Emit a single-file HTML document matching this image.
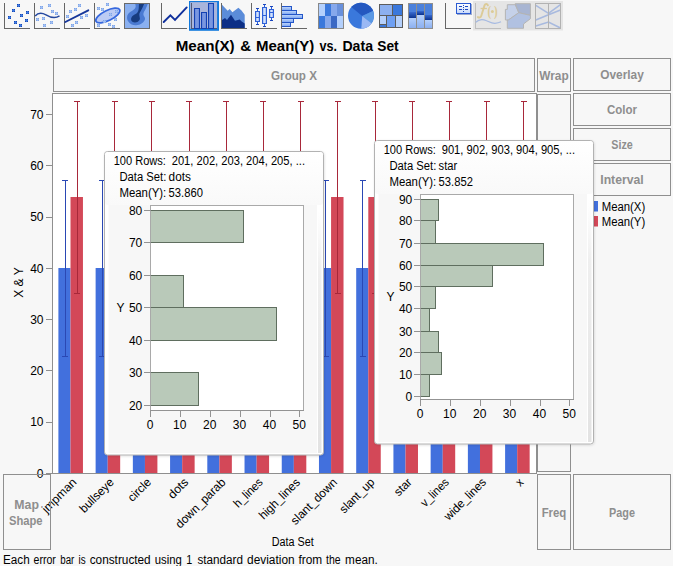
<!DOCTYPE html>
<html><head><meta charset="utf-8"><title>Graph Builder</title>
<style>html,body{margin:0;padding:0;background:#f7f7f7;overflow:hidden}svg{display:block}text{font-family:"Liberation Sans",sans-serif}</style>
</head><body>
<svg width="673" height="566" viewBox="0 0 673 566">
<defs>
<filter id="sh" x="-5%" y="-5%" width="112%" height="112%"><feDropShadow dx="0.5" dy="0.8" stdDeviation="0.9" flood-color="#000" flood-opacity="0.13"/></filter>
<linearGradient id="hb" x1="0" y1="0" x2="0" y2="1"><stop offset="0" stop-color="#c4d9fc"/><stop offset="1" stop-color="#7aa4f0"/></linearGradient>
<linearGradient id="bx" x1="0" y1="0" x2="1" y2="0"><stop offset="0" stop-color="#8db0f0"/><stop offset=".5" stop-color="#d2e1fd"/><stop offset="1" stop-color="#8db0f0"/></linearGradient>
<linearGradient id="bg7" x1="0" y1="0" x2="1" y2="0"><stop offset="0" stop-color="#6485d8"/><stop offset=".5" stop-color="#7f9be2"/><stop offset="1" stop-color="#6485d8"/></linearGradient>
<linearGradient id="cp" x1="0" y1="0" x2="0" y2="1"><stop offset="0" stop-color="#ffffff"/><stop offset="1" stop-color="#c6d8fa"/></linearGradient>
<linearGradient id="mz" x1="0" y1="0" x2="0" y2="1"><stop offset="0" stop-color="#3a6cd0"/><stop offset="1" stop-color="#0c3490"/></linearGradient>
<linearGradient id="ml" x1="0" y1="0" x2="0" y2="1"><stop offset="0" stop-color="#b4d0fc"/><stop offset="1" stop-color="#8cb0f0"/></linearGradient>
<linearGradient id="tg" x1="0" y1="0" x2="0" y2="1"><stop offset="0" stop-color="#ffffff"/><stop offset="1" stop-color="#f9f9f9"/></linearGradient>
<linearGradient id="ts" x1="0" y1="0" x2="0" y2="1"><stop offset="0" stop-color="#f2f2f2" stop-opacity="0"/><stop offset=".25" stop-color="#efefef"/><stop offset="1" stop-color="#e3e3e3"/></linearGradient>
</defs>
<rect x="0" y="0" width="673" height="566" fill="#f7f7f7" />
<path d="M4.5 3 V28.5 H29.5" fill="none" stroke="#666666" stroke-width="1" shape-rendering="crispEdges"/>
<g shape-rendering="crispEdges"><rect x="17" y="4" width="3" height="3" fill="#1848b4"/><rect x="18" y="4" width="1" height="3" fill="#3d78de"/><rect x="17" y="5" width="3" height="1" fill="#3d78de"/></g>
<g shape-rendering="crispEdges"><rect x="12" y="9" width="3" height="3" fill="#1848b4"/><rect x="13" y="9" width="1" height="3" fill="#3d78de"/><rect x="12" y="10" width="3" height="1" fill="#3d78de"/></g>
<g shape-rendering="crispEdges"><rect x="26" y="11" width="3" height="3" fill="#1848b4"/><rect x="27" y="11" width="1" height="3" fill="#3d78de"/><rect x="26" y="12" width="3" height="1" fill="#3d78de"/></g>
<g shape-rendering="crispEdges"><rect x="20" y="14" width="3" height="3" fill="#1848b4"/><rect x="21" y="14" width="1" height="3" fill="#3d78de"/><rect x="20" y="15" width="3" height="1" fill="#3d78de"/></g>
<g shape-rendering="crispEdges"><rect x="8" y="16" width="3" height="3" fill="#1848b4"/><rect x="9" y="16" width="1" height="3" fill="#3d78de"/><rect x="8" y="17" width="3" height="1" fill="#3d78de"/></g>
<g shape-rendering="crispEdges"><rect x="25" y="19" width="3" height="3" fill="#1848b4"/><rect x="26" y="19" width="1" height="3" fill="#3d78de"/><rect x="25" y="20" width="3" height="1" fill="#3d78de"/></g>
<g shape-rendering="crispEdges"><rect x="14" y="21" width="3" height="3" fill="#1848b4"/><rect x="15" y="21" width="1" height="3" fill="#3d78de"/><rect x="14" y="22" width="3" height="1" fill="#3d78de"/></g>
<g shape-rendering="crispEdges"><rect x="19" y="24" width="3" height="3" fill="#1848b4"/><rect x="20" y="24" width="1" height="3" fill="#3d78de"/><rect x="19" y="25" width="3" height="1" fill="#3d78de"/></g>
<path d="M34.5 3 V28.5 H59.5" fill="none" stroke="#666666" stroke-width="1" shape-rendering="crispEdges"/>
<g shape-rendering="crispEdges"><rect x="40" y="6" width="3" height="3" fill="#7ea4e6"/><rect x="41" y="6" width="1" height="3" fill="#a0bef2"/><rect x="40" y="7" width="3" height="1" fill="#a0bef2"/></g>
<g shape-rendering="crispEdges"><rect x="48" y="4" width="3" height="3" fill="#7ea4e6"/><rect x="49" y="4" width="1" height="3" fill="#a0bef2"/><rect x="48" y="5" width="3" height="1" fill="#a0bef2"/></g>
<g shape-rendering="crispEdges"><rect x="51" y="10" width="3" height="3" fill="#7ea4e6"/><rect x="52" y="10" width="1" height="3" fill="#a0bef2"/><rect x="51" y="11" width="3" height="1" fill="#a0bef2"/></g>
<g shape-rendering="crispEdges"><rect x="55" y="12" width="3" height="3" fill="#7ea4e6"/><rect x="56" y="12" width="1" height="3" fill="#a0bef2"/><rect x="55" y="13" width="3" height="1" fill="#a0bef2"/></g>
<g shape-rendering="crispEdges"><rect x="36" y="18" width="3" height="3" fill="#7ea4e6"/><rect x="37" y="18" width="1" height="3" fill="#a0bef2"/><rect x="36" y="19" width="3" height="1" fill="#a0bef2"/></g>
<g shape-rendering="crispEdges"><rect x="42" y="17" width="3" height="3" fill="#7ea4e6"/><rect x="43" y="17" width="1" height="3" fill="#a0bef2"/><rect x="42" y="18" width="3" height="1" fill="#a0bef2"/></g>
<g shape-rendering="crispEdges"><rect x="50" y="21" width="3" height="3" fill="#7ea4e6"/><rect x="51" y="21" width="1" height="3" fill="#a0bef2"/><rect x="50" y="22" width="3" height="1" fill="#a0bef2"/></g>
<g shape-rendering="crispEdges"><rect x="43" y="24" width="3" height="3" fill="#7ea4e6"/><rect x="44" y="24" width="1" height="3" fill="#a0bef2"/><rect x="43" y="25" width="3" height="1" fill="#a0bef2"/></g>
<path d="M35.2 16 C37.5 13.2 41.5 12.4 46 14.8 C51 17.8 55.5 18.6 59.5 15.8" fill="none" stroke="#24489f" stroke-width="1.5"/>
<path d="M64.5 3 V28.5 H89.5" fill="none" stroke="#666666" stroke-width="1" shape-rendering="crispEdges"/>
<g shape-rendering="crispEdges"><rect x="78" y="4" width="3" height="3" fill="#7ea4e6"/><rect x="79" y="4" width="1" height="3" fill="#a0bef2"/><rect x="78" y="5" width="3" height="1" fill="#a0bef2"/></g>
<g shape-rendering="crispEdges"><rect x="74" y="8" width="3" height="3" fill="#7ea4e6"/><rect x="75" y="8" width="1" height="3" fill="#a0bef2"/><rect x="74" y="9" width="3" height="1" fill="#a0bef2"/></g>
<g shape-rendering="crispEdges"><rect x="69" y="10" width="3" height="3" fill="#7ea4e6"/><rect x="70" y="10" width="1" height="3" fill="#a0bef2"/><rect x="69" y="11" width="3" height="1" fill="#a0bef2"/></g>
<g shape-rendering="crispEdges"><rect x="66" y="15" width="3" height="3" fill="#7ea4e6"/><rect x="67" y="15" width="1" height="3" fill="#a0bef2"/><rect x="66" y="16" width="3" height="1" fill="#a0bef2"/></g>
<g shape-rendering="crispEdges"><rect x="85" y="14" width="3" height="3" fill="#7ea4e6"/><rect x="86" y="14" width="1" height="3" fill="#a0bef2"/><rect x="85" y="15" width="3" height="1" fill="#a0bef2"/></g>
<g shape-rendering="crispEdges"><rect x="80" y="16" width="3" height="3" fill="#7ea4e6"/><rect x="81" y="16" width="1" height="3" fill="#a0bef2"/><rect x="80" y="17" width="3" height="1" fill="#a0bef2"/></g>
<g shape-rendering="crispEdges"><rect x="75" y="21" width="3" height="3" fill="#7ea4e6"/><rect x="76" y="21" width="1" height="3" fill="#a0bef2"/><rect x="75" y="22" width="3" height="1" fill="#a0bef2"/></g>
<g shape-rendering="crispEdges"><rect x="71" y="24" width="3" height="3" fill="#7ea4e6"/><rect x="72" y="24" width="1" height="3" fill="#a0bef2"/><rect x="71" y="25" width="3" height="1" fill="#a0bef2"/></g>
<path d="M65.3 22 L88.3 10.3" stroke="#17379a" stroke-width="1.9" stroke-linecap="round"/>
<path d="M94.5 3 V28.5 H119.5" fill="none" stroke="#666666" stroke-width="1" shape-rendering="crispEdges"/>
<ellipse cx="108" cy="15.4" rx="13.2" ry="5.1" transform="rotate(-26 108.1 15.8)" fill="#bccbf4" stroke="#3668de" stroke-width="1.7"/>
<g shape-rendering="crispEdges"><rect x="106" y="3" width="3" height="3" fill="#7ea4e6"/><rect x="107" y="3" width="1" height="3" fill="#a0bef2"/><rect x="106" y="4" width="3" height="1" fill="#a0bef2"/></g>
<g shape-rendering="crispEdges"><rect x="97" y="7" width="3" height="3" fill="#7ea4e6"/><rect x="98" y="7" width="1" height="3" fill="#a0bef2"/><rect x="97" y="8" width="3" height="1" fill="#a0bef2"/></g>
<g shape-rendering="crispEdges"><rect x="101" y="8" width="3" height="3" fill="#7ea4e6"/><rect x="102" y="8" width="1" height="3" fill="#a0bef2"/><rect x="101" y="9" width="3" height="1" fill="#a0bef2"/></g>
<g shape-rendering="crispEdges"><rect x="115" y="10" width="3" height="3" fill="#7ea4e6"/><rect x="116" y="10" width="1" height="3" fill="#a0bef2"/><rect x="115" y="11" width="3" height="1" fill="#a0bef2"/></g>
<g shape-rendering="crispEdges"><rect x="109" y="13" width="3" height="3" fill="#7ea4e6"/><rect x="110" y="13" width="1" height="3" fill="#a0bef2"/><rect x="109" y="14" width="3" height="1" fill="#a0bef2"/></g>
<g shape-rendering="crispEdges"><rect x="114" y="18" width="3" height="3" fill="#7ea4e6"/><rect x="115" y="18" width="1" height="3" fill="#a0bef2"/><rect x="114" y="19" width="3" height="1" fill="#a0bef2"/></g>
<g shape-rendering="crispEdges"><rect x="103" y="20" width="3" height="3" fill="#7ea4e6"/><rect x="104" y="20" width="1" height="3" fill="#a0bef2"/><rect x="103" y="21" width="3" height="1" fill="#a0bef2"/></g>
<g shape-rendering="crispEdges"><rect x="108" y="23" width="3" height="3" fill="#7ea4e6"/><rect x="109" y="23" width="1" height="3" fill="#a0bef2"/><rect x="108" y="24" width="3" height="1" fill="#a0bef2"/></g>
<g shape-rendering="crispEdges"><rect x="97" y="24" width="3" height="3" fill="#7ea4e6"/><rect x="98" y="24" width="1" height="3" fill="#a0bef2"/><rect x="97" y="25" width="3" height="1" fill="#a0bef2"/></g>
<g shape-rendering="crispEdges"><rect x="112" y="25" width="3" height="3" fill="#7ea4e6"/><rect x="113" y="25" width="1" height="3" fill="#a0bef2"/><rect x="112" y="26" width="3" height="1" fill="#a0bef2"/></g>
<g><clipPath id="c5"><rect x="125" y="4" width="24.5" height="24.5"/></clipPath>
<rect x="124.5" y="3.5" width="25" height="25" fill="#8ab0f0" stroke="#6a6a6a" shape-rendering="crispEdges"/>
<g clip-path="url(#c5)">
<path d="M135 3.5 C135.6 5 136 6.3 135.3 7.8 C134 10.5 130 11.5 128.3 13.8 C126.8 15.8 126.6 18.5 127.8 20.7 C129.5 24 133 25.4 136.2 25.2 C140 25 143.8 23 144.9 19.5 C145.6 17.3 143.3 16 143.4 14 C143.5 12.3 144.7 11 145.4 9.6 C146.3 7.6 147.2 5.5 148 3.5 Z" fill="#4a7ad2"/>
<path d="M138.9 3.5 C138.9 7 138.8 9.5 138.1 11.3 C137 14 134.5 14.3 132.8 15.8 C130.6 17.7 130.6 20.5 132.4 21.8 C134.5 23.2 138 22.6 139.5 20 C140.5 18.2 139.3 16.5 139.3 14.7 C139.4 13 140 12.3 140.6 11.3 C142 9 143.3 6 144.3 3.5 Z" fill="#173c80"/>
</g></g>
<path d="M161.5 3 V28.5 H186.5" fill="none" stroke="#666666" stroke-width="1" shape-rendering="crispEdges"/>
<path d="M163.7 22 L170.4 15.4 L175 20 L186.7 7.4" fill="none" stroke="#10309c" stroke-width="1.9" stroke-linejoin="miter" stroke-linecap="round"/>
<rect x="189" y="1" width="30" height="29.8" fill="#137add"/>
<rect x="190.1" y="2.1" width="27" height="26.7" fill="#a9b5db"/>
<path d="M191.5 3 V28.5 H217" fill="none" stroke="#545a74" shape-rendering="crispEdges"/>
<g shape-rendering="crispEdges" fill="url(#bg7)" stroke="#1441b2">
<rect x="194.5" y="8.5" width="5" height="20"/>
<rect x="201.5" y="12.5" width="5" height="16"/>
<rect x="208.5" y="3.5" width="5" height="25"/>
</g>
<path d="M222 4.7 L227.7 10.7 L229.7 9.1 L232.4 12.3 L238.4 7.8 L241.5 10.5 L244.7 14.7 V28 H222 Z" fill="#5b8cd9"/>
<path d="M222 20 L225 18 L227 20 L231 14.7 L235 20.7 L239.7 19.4 L241.7 21.4 L244.7 23.4 V28 H222 Z" fill="#0d2f86"/>
<path d="M221.5 3 V28.5 H246.5" fill="none" stroke="#666666" stroke-width="1" shape-rendering="crispEdges"/>
<path d="M251.5 3 V28.5 H276.5" fill="none" stroke="#666666" stroke-width="1" shape-rendering="crispEdges"/>
<g shape-rendering="crispEdges">
<line x1="257.5" y1="8.5" x2="257.5" y2="24.5" stroke="#2e60d8"/>
<rect x="255.5" y="11.5" width="4" height="10.0" fill="url(#bx)" stroke="#2e60d8"/>
<line x1="255.5" y1="17.5" x2="259.5" y2="17.5" stroke="#2e60d8"/>
<rect x="256.0" y="8.0" width="3" height="1.4" fill="#1a46be"/>
<rect x="256.0" y="23.6" width="3" height="1.4" fill="#1a46be"/>
</g>
<g shape-rendering="crispEdges">
<line x1="264.5" y1="4.5" x2="264.5" y2="26.5" stroke="#2e60d8"/>
<rect x="262.5" y="7.5" width="4" height="16.0" fill="url(#bx)" stroke="#2e60d8"/>
<line x1="262.5" y1="15.5" x2="266.5" y2="15.5" stroke="#2e60d8"/>
<rect x="263.0" y="4.0" width="3" height="1.4" fill="#1a46be"/>
<rect x="263.0" y="25.6" width="3" height="1.4" fill="#1a46be"/>
</g>
<g shape-rendering="crispEdges">
<line x1="271.5" y1="6.5" x2="271.5" y2="20.5" stroke="#2e60d8"/>
<rect x="269.5" y="9.5" width="4" height="8.0" fill="url(#bx)" stroke="#2e60d8"/>
<line x1="269.5" y1="12.5" x2="273.5" y2="12.5" stroke="#2e60d8"/>
<rect x="270.0" y="6.0" width="3" height="1.4" fill="#1a46be"/>
<rect x="270.0" y="19.6" width="3" height="1.4" fill="#1a46be"/>
</g>
<path d="M281.5 3 V28.5 H306.5" fill="none" stroke="#666666" stroke-width="1" shape-rendering="crispEdges"/>
<g shape-rendering="crispEdges" fill="url(#hb)" stroke="#2456c8">
<path d="M282 6.5 H291.5 V10.5 H282"/>
<path d="M282 10.5 H296.5 V14.5 H282"/>
<path d="M282 14.5 H302.5 V18.5 H282"/>
<path d="M282 18.5 H293.5 V22.5 H282"/>
<path d="M282 22.5 H290.5 V26.5 H282"/>
</g>
<g shape-rendering="crispEdges">
<rect x="318.5" y="3.5" width="6.25" height="12.5" fill="#b4d0fc"/>
<rect x="318.5" y="16" width="6.25" height="12.5" fill="#3a78dc"/>
<rect x="324.75" y="3.5" width="6.25" height="12.5" fill="#3a78dc"/>
<rect x="324.75" y="16" width="6.25" height="12.5" fill="#86a8ec"/>
<rect x="331.0" y="3.5" width="6.25" height="12.5" fill="#86a8ec"/>
<rect x="331.0" y="16" width="6.25" height="12.5" fill="#3a68c4"/>
<rect x="337.25" y="3.5" width="6.25" height="12.5" fill="#6890dc"/>
<rect x="337.25" y="16" width="6.25" height="12.5" fill="#b4d0fc"/>
<rect x="318.5" y="3.5" width="25" height="25" fill="none" stroke="#888888"/>
</g>
<clipPath id="pc"><circle cx="361" cy="15.8" r="13"/></clipPath>
<g clip-path="url(#pc)">
<rect x="347" y="2" width="29" height="28" fill="#3a78dc"/>
<path d="M362.2 16.0 L331.6 -9.2 L362 -30 L396.4 -0.2 Z" fill="#2458c0"/>
<path d="M362.2 16.0 L396.4 -0.2 L390.4 38.2 Z" fill="#5a98e4"/>
<path d="M362.2 16.0 L390.4 38.2 L359.5 53.8 Z" fill="#9ab8f4"/>
</g>
<g shape-rendering="crispEdges">
<rect x="379" y="4" width="24" height="24" fill="#5c5c5c"/>
<rect x="380" y="5" width="12" height="10" fill="#8cb0f0"/>
<rect x="393" y="5" width="9" height="10" fill="#3a78dc"/>
<rect x="380" y="16" width="6" height="8" fill="#b4d0fc"/>
<rect x="380" y="25" width="6" height="2" fill="#3a78dc"/>
<rect x="387" y="16" width="8" height="11" fill="#6ea0f4"/>
<rect x="396" y="16" width="6" height="11" fill="#b4d0fc"/>
</g>
<g shape-rendering="crispEdges">
<rect x="408" y="3" width="25" height="26" fill="#8e8e8e"/>
<rect x="409" y="4" width="7" height="8" fill="#4a80dc"/>
<rect x="409" y="12" width="7" height="6" fill="url(#mz)"/>
<rect x="409" y="18" width="7" height="10" fill="url(#ml)"/>
<rect x="417" y="4" width="7" height="6.699999999999999" fill="#4a80dc"/>
<rect x="417" y="10.7" width="7" height="4.0" fill="url(#mz)"/>
<rect x="417" y="14.7" width="7" height="13.3" fill="url(#ml)"/>
<rect x="425" y="4" width="7" height="10.7" fill="#4a80dc"/>
<rect x="425" y="14.7" width="7" height="5.300000000000001" fill="url(#mz)"/>
<rect x="425" y="20" width="7" height="8" fill="url(#ml)"/>
</g>
<path d="M445.5 3 V28.5 H470.5" fill="none" stroke="#666666" stroke-width="1" shape-rendering="crispEdges"/>
<g shape-rendering="crispEdges">
<rect x="457" y="4" width="15" height="10.5" fill="#2a4a9c" opacity=".45"/>
<rect x="456.5" y="3.5" width="14" height="10" fill="url(#cp)" stroke="#2a5ad2"/>
<rect x="459" y="6.0" width="3.4" height="1.2" fill="#1c48c0"/>
<rect x="465" y="6.0" width="3.4" height="1.2" fill="#1c48c0"/>
<rect x="459" y="9.0" width="3.4" height="1.2" fill="#1c48c0"/>
<rect x="465" y="9.0" width="3.4" height="1.2" fill="#1c48c0"/>
<rect x="463" y="5" width="1" height="1" fill="#1c48c0"/>
<rect x="463" y="7.2" width="1" height="1" fill="#1c48c0"/>
<rect x="463" y="9.4" width="1" height="1" fill="#1c48c0"/>
<rect x="463" y="11.4" width="1" height="1" fill="#1c48c0"/>
</g>
<rect x="473" y="1" width="90" height="29.5" fill="#e5e5e5"/>
<path d="M475.5 3 V28.5 H501" fill="none" stroke="#bdbdbd" shape-rendering="crispEdges"/>
<path d="M487.9 5.4 C487.7 3.6 485.3 3.3 484.5 5.4 L481.3 15.8 C480.8 17.5 479.3 18 477.9 17.1" fill="none" stroke="#dccb98" stroke-width="1.9" stroke-linecap="round"/>
<path d="M480.6 8.5 H486.9" fill="none" stroke="#dccb98" stroke-width="1.3"/>
<text x="487.6" y="15.8" font-size="15" font-weight="bold" fill="#dccb98" style="font-family:'Liberation Serif',serif" textLength="3.6" lengthAdjust="spacingAndGlyphs">(</text>
<text x="494" y="15.8" font-size="15" font-weight="bold" fill="#dccb98" style="font-family:'Liberation Serif',serif" textLength="3.6" lengthAdjust="spacingAndGlyphs">)</text>
<circle cx="492.4" cy="11.4" r="1.5" fill="#dccb98"/>
<path d="M475.7 22.3 C478 20 481 19.1 484 19.8 C488 20.8 491 23.5 495 23.3 C497.5 23.2 499.5 22.6 501 21.8" fill="none" stroke="#a6bae2" stroke-width="1.3"/>
<g stroke="#b4b4b4" stroke-width="1" stroke-linejoin="round">
<path d="M507.3 4.7 H515.2 L518.8 12.7 L508.4 20 H505.4 V9.4 H507.3 Z" fill="#c5d1e9"/>
<path d="M515.2 3.7 H530.4 V15.4 L518.8 12.7 Z" fill="#a8b5d2"/>
<path d="M518.8 12.7 L530.4 15.4 V18.7 L523.5 24 V28.3 H507.3 V20 H508.4 Z" fill="#b1c1e1"/>
</g>
<g fill="none">
<path d="M535.8 5.3 L548.5 13.4 L560.5 4.7 M535.8 20 L548.5 14.7 L560.5 10 M535.8 26 L548.5 22 L560.5 28" stroke="#a8badf" stroke-width="1.6"/>
<rect x="535.5" y="3.5" width="25" height="25" stroke="#b2b2b2" shape-rendering="crispEdges"/>
<line x1="548.5" y1="3.5" x2="548.5" y2="28.5" stroke="#b2b2b2" shape-rendering="crispEdges"/>
</g>
<text x="175.7" y="50.5" font-size="14.67" fill="#000" text-anchor="start" font-weight="bold" textLength="58.9" lengthAdjust="spacingAndGlyphs">Mean(X)</text>
<text x="240.3" y="50.5" font-size="14.67" fill="#000" text-anchor="start" font-weight="bold" textLength="10.9" lengthAdjust="spacingAndGlyphs">&amp;</text>
<text x="256.0" y="50.5" font-size="14.67" fill="#000" text-anchor="start" font-weight="bold" textLength="58.3" lengthAdjust="spacingAndGlyphs">Mean(Y)</text>
<text x="319.5" y="50.5" font-size="14.67" fill="#000" text-anchor="start" font-weight="bold" textLength="17.5" lengthAdjust="spacingAndGlyphs">vs.</text>
<text x="342.4" y="50.5" font-size="14.67" fill="#000" text-anchor="start" font-weight="bold" textLength="30.6" lengthAdjust="spacingAndGlyphs">Data</text>
<text x="377.3" y="50.5" font-size="14.67" fill="#000" text-anchor="start" font-weight="bold" textLength="21.4" lengthAdjust="spacingAndGlyphs">Set</text>
<rect x="53.5" y="58.5" width="481" height="33" fill="none" stroke="#8f8f8f" stroke-width="1" shape-rendering="crispEdges"/>
<text x="294.0" y="79.6" font-size="12" fill="#8e8e8e" text-anchor="middle" font-weight="bold" textLength="45.8" lengthAdjust="spacingAndGlyphs">Group X</text>
<rect x="537.5" y="58.5" width="33" height="33" fill="none" stroke="#8f8f8f" stroke-width="1" shape-rendering="crispEdges"/>
<text x="554.0" y="80" font-size="12" fill="#8e8e8e" text-anchor="middle" font-weight="bold" textLength="29.4" lengthAdjust="spacingAndGlyphs">Wrap</text>
<rect x="573.5" y="58.5" width="97" height="32" fill="none" stroke="#8f8f8f" stroke-width="1" shape-rendering="crispEdges"/>
<text x="622.0" y="79" font-size="12" fill="#8e8e8e" text-anchor="middle" font-weight="bold" textLength="43.6" lengthAdjust="spacingAndGlyphs">Overlay</text>
<rect x="573.5" y="93.5" width="97" height="32" fill="none" stroke="#8f8f8f" stroke-width="1" shape-rendering="crispEdges"/>
<text x="622.0" y="114" font-size="12" fill="#8e8e8e" text-anchor="middle" font-weight="bold" textLength="30.1" lengthAdjust="spacingAndGlyphs">Color</text>
<rect x="573.5" y="128.5" width="97" height="32" fill="none" stroke="#8f8f8f" stroke-width="1" shape-rendering="crispEdges"/>
<text x="622.0" y="148.5" font-size="12" fill="#8e8e8e" text-anchor="middle" font-weight="bold" textLength="21.5" lengthAdjust="spacingAndGlyphs">Size</text>
<rect x="573.5" y="163.5" width="97" height="32" fill="none" stroke="#8f8f8f" stroke-width="1" shape-rendering="crispEdges"/>
<text x="622.0" y="183.5" font-size="12" fill="#8e8e8e" text-anchor="middle" font-weight="bold" textLength="43.5" lengthAdjust="spacingAndGlyphs">Interval</text>
<rect x="537.5" y="94.5" width="33" height="377" fill="none" stroke="#8f8f8f" stroke-width="1" shape-rendering="crispEdges"/>
<rect x="537.5" y="474.5" width="33" height="75" fill="none" stroke="#8f8f8f" stroke-width="1" shape-rendering="crispEdges"/>
<text x="554.0" y="517" font-size="12" fill="#8e8e8e" text-anchor="middle" font-weight="bold" textLength="24.7" lengthAdjust="spacingAndGlyphs">Freq</text>
<rect x="573.5" y="474.5" width="97" height="75" fill="none" stroke="#8f8f8f" stroke-width="1" shape-rendering="crispEdges"/>
<text x="622.0" y="517" font-size="12" fill="#8e8e8e" text-anchor="middle" font-weight="bold" textLength="25.9" lengthAdjust="spacingAndGlyphs">Page</text>
<rect x="52.5" y="93.5" width="484" height="380" fill="#fff" stroke="#8f8f8f" stroke-width="1" shape-rendering="crispEdges"/>
<g>
<rect x="58.40" y="268" width="12.1" height="205" fill="#4270dd"/>
<rect x="70.50" y="197" width="12.45" height="276" fill="#d34858"/>
<rect x="95.62" y="268" width="12.1" height="205" fill="#4270dd"/>
<rect x="107.72" y="197" width="12.45" height="276" fill="#d34858"/>
<rect x="132.85" y="268" width="12.1" height="205" fill="#4270dd"/>
<rect x="144.95" y="197" width="12.45" height="276" fill="#d34858"/>
<rect x="170.08" y="268" width="12.1" height="205" fill="#4270dd"/>
<rect x="182.18" y="197" width="12.45" height="276" fill="#d34858"/>
<rect x="207.30" y="268" width="12.1" height="205" fill="#4270dd"/>
<rect x="219.40" y="197" width="12.45" height="276" fill="#d34858"/>
<rect x="244.53" y="268" width="12.1" height="205" fill="#4270dd"/>
<rect x="256.62" y="197" width="12.45" height="276" fill="#d34858"/>
<rect x="281.75" y="268" width="12.1" height="205" fill="#4270dd"/>
<rect x="293.85" y="197" width="12.45" height="276" fill="#d34858"/>
<rect x="318.97" y="268" width="12.1" height="205" fill="#4270dd"/>
<rect x="331.07" y="197" width="12.45" height="276" fill="#d34858"/>
<rect x="356.20" y="268" width="12.1" height="205" fill="#4270dd"/>
<rect x="368.30" y="197" width="12.45" height="276" fill="#d34858"/>
<rect x="393.43" y="268" width="12.1" height="205" fill="#4270dd"/>
<rect x="405.53" y="197" width="12.45" height="276" fill="#d34858"/>
<rect x="430.65" y="268" width="12.1" height="205" fill="#4270dd"/>
<rect x="442.75" y="197" width="12.45" height="276" fill="#d34858"/>
<rect x="467.88" y="268" width="12.1" height="205" fill="#4270dd"/>
<rect x="479.98" y="197" width="12.45" height="276" fill="#d34858"/>
<rect x="505.10" y="268" width="12.1" height="205" fill="#4270dd"/>
<rect x="517.20" y="197" width="12.45" height="276" fill="#d34858"/>
</g>
<g shape-rendering="crispEdges">
<line x1="77.5" y1="101" x2="77.5" y2="294" stroke="#a8283a" stroke-width="1" />
<line x1="74" y1="101.5" x2="80" y2="101.5" stroke="#a8283a" stroke-width="1" />
<line x1="74" y1="293.5" x2="80" y2="293.5" stroke="#a8283a" stroke-width="1" />
<line x1="65.5" y1="180" x2="65.5" y2="357" stroke="#2a48b4" stroke-width="1" />
<line x1="62" y1="180.5" x2="68" y2="180.5" stroke="#2a48b4" stroke-width="1" />
<line x1="62" y1="356.5" x2="68" y2="356.5" stroke="#2a48b4" stroke-width="1" />
<line x1="114.5" y1="101" x2="114.5" y2="294" stroke="#a8283a" stroke-width="1" />
<line x1="112" y1="101.5" x2="118" y2="101.5" stroke="#a8283a" stroke-width="1" />
<line x1="112" y1="293.5" x2="118" y2="293.5" stroke="#a8283a" stroke-width="1" />
<line x1="102.5" y1="180" x2="102.5" y2="357" stroke="#2a48b4" stroke-width="1" />
<line x1="99" y1="180.5" x2="105" y2="180.5" stroke="#2a48b4" stroke-width="1" />
<line x1="99" y1="356.5" x2="105" y2="356.5" stroke="#2a48b4" stroke-width="1" />
<line x1="151.5" y1="101" x2="151.5" y2="294" stroke="#a8283a" stroke-width="1" />
<line x1="149" y1="101.5" x2="155" y2="101.5" stroke="#a8283a" stroke-width="1" />
<line x1="149" y1="293.5" x2="155" y2="293.5" stroke="#a8283a" stroke-width="1" />
<line x1="139.5" y1="180" x2="139.5" y2="357" stroke="#2a48b4" stroke-width="1" />
<line x1="137" y1="180.5" x2="143" y2="180.5" stroke="#2a48b4" stroke-width="1" />
<line x1="137" y1="356.5" x2="143" y2="356.5" stroke="#2a48b4" stroke-width="1" />
<line x1="189.5" y1="101" x2="189.5" y2="294" stroke="#a8283a" stroke-width="1" />
<line x1="186" y1="101.5" x2="192" y2="101.5" stroke="#a8283a" stroke-width="1" />
<line x1="186" y1="293.5" x2="192" y2="293.5" stroke="#a8283a" stroke-width="1" />
<line x1="176.5" y1="180" x2="176.5" y2="357" stroke="#2a48b4" stroke-width="1" />
<line x1="174" y1="180.5" x2="180" y2="180.5" stroke="#2a48b4" stroke-width="1" />
<line x1="174" y1="356.5" x2="180" y2="356.5" stroke="#2a48b4" stroke-width="1" />
<line x1="226.5" y1="101" x2="226.5" y2="294" stroke="#a8283a" stroke-width="1" />
<line x1="223" y1="101.5" x2="229" y2="101.5" stroke="#a8283a" stroke-width="1" />
<line x1="223" y1="293.5" x2="229" y2="293.5" stroke="#a8283a" stroke-width="1" />
<line x1="214.5" y1="180" x2="214.5" y2="357" stroke="#2a48b4" stroke-width="1" />
<line x1="211" y1="180.5" x2="217" y2="180.5" stroke="#2a48b4" stroke-width="1" />
<line x1="211" y1="356.5" x2="217" y2="356.5" stroke="#2a48b4" stroke-width="1" />
<line x1="263.5" y1="101" x2="263.5" y2="294" stroke="#a8283a" stroke-width="1" />
<line x1="260" y1="101.5" x2="266" y2="101.5" stroke="#a8283a" stroke-width="1" />
<line x1="260" y1="293.5" x2="266" y2="293.5" stroke="#a8283a" stroke-width="1" />
<line x1="251.5" y1="180" x2="251.5" y2="357" stroke="#2a48b4" stroke-width="1" />
<line x1="248" y1="180.5" x2="254" y2="180.5" stroke="#2a48b4" stroke-width="1" />
<line x1="248" y1="356.5" x2="254" y2="356.5" stroke="#2a48b4" stroke-width="1" />
<line x1="300.5" y1="101" x2="300.5" y2="294" stroke="#a8283a" stroke-width="1" />
<line x1="298" y1="101.5" x2="304" y2="101.5" stroke="#a8283a" stroke-width="1" />
<line x1="298" y1="293.5" x2="304" y2="293.5" stroke="#a8283a" stroke-width="1" />
<line x1="288.5" y1="180" x2="288.5" y2="357" stroke="#2a48b4" stroke-width="1" />
<line x1="285" y1="180.5" x2="291" y2="180.5" stroke="#2a48b4" stroke-width="1" />
<line x1="285" y1="356.5" x2="291" y2="356.5" stroke="#2a48b4" stroke-width="1" />
<line x1="337.5" y1="101" x2="337.5" y2="294" stroke="#a8283a" stroke-width="1" />
<line x1="335" y1="101.5" x2="341" y2="101.5" stroke="#a8283a" stroke-width="1" />
<line x1="335" y1="293.5" x2="341" y2="293.5" stroke="#a8283a" stroke-width="1" />
<line x1="325.5" y1="180" x2="325.5" y2="357" stroke="#2a48b4" stroke-width="1" />
<line x1="323" y1="180.5" x2="329" y2="180.5" stroke="#2a48b4" stroke-width="1" />
<line x1="323" y1="356.5" x2="329" y2="356.5" stroke="#2a48b4" stroke-width="1" />
<line x1="375.5" y1="101" x2="375.5" y2="294" stroke="#a8283a" stroke-width="1" />
<line x1="372" y1="101.5" x2="378" y2="101.5" stroke="#a8283a" stroke-width="1" />
<line x1="372" y1="293.5" x2="378" y2="293.5" stroke="#a8283a" stroke-width="1" />
<line x1="362.5" y1="180" x2="362.5" y2="357" stroke="#2a48b4" stroke-width="1" />
<line x1="360" y1="180.5" x2="366" y2="180.5" stroke="#2a48b4" stroke-width="1" />
<line x1="360" y1="356.5" x2="366" y2="356.5" stroke="#2a48b4" stroke-width="1" />
<line x1="412.5" y1="101" x2="412.5" y2="294" stroke="#a8283a" stroke-width="1" />
<line x1="409" y1="101.5" x2="415" y2="101.5" stroke="#a8283a" stroke-width="1" />
<line x1="409" y1="293.5" x2="415" y2="293.5" stroke="#a8283a" stroke-width="1" />
<line x1="400.5" y1="180" x2="400.5" y2="357" stroke="#2a48b4" stroke-width="1" />
<line x1="397" y1="180.5" x2="403" y2="180.5" stroke="#2a48b4" stroke-width="1" />
<line x1="397" y1="356.5" x2="403" y2="356.5" stroke="#2a48b4" stroke-width="1" />
<line x1="449.5" y1="101" x2="449.5" y2="294" stroke="#a8283a" stroke-width="1" />
<line x1="446" y1="101.5" x2="452" y2="101.5" stroke="#a8283a" stroke-width="1" />
<line x1="446" y1="293.5" x2="452" y2="293.5" stroke="#a8283a" stroke-width="1" />
<line x1="437.5" y1="180" x2="437.5" y2="357" stroke="#2a48b4" stroke-width="1" />
<line x1="434" y1="180.5" x2="440" y2="180.5" stroke="#2a48b4" stroke-width="1" />
<line x1="434" y1="356.5" x2="440" y2="356.5" stroke="#2a48b4" stroke-width="1" />
<line x1="486.5" y1="101" x2="486.5" y2="294" stroke="#a8283a" stroke-width="1" />
<line x1="484" y1="101.5" x2="490" y2="101.5" stroke="#a8283a" stroke-width="1" />
<line x1="484" y1="293.5" x2="490" y2="293.5" stroke="#a8283a" stroke-width="1" />
<line x1="474.5" y1="180" x2="474.5" y2="357" stroke="#2a48b4" stroke-width="1" />
<line x1="472" y1="180.5" x2="478" y2="180.5" stroke="#2a48b4" stroke-width="1" />
<line x1="472" y1="356.5" x2="478" y2="356.5" stroke="#2a48b4" stroke-width="1" />
<line x1="523.5" y1="101" x2="523.5" y2="294" stroke="#a8283a" stroke-width="1" />
<line x1="521" y1="101.5" x2="527" y2="101.5" stroke="#a8283a" stroke-width="1" />
<line x1="521" y1="293.5" x2="527" y2="293.5" stroke="#a8283a" stroke-width="1" />
<line x1="511.5" y1="180" x2="511.5" y2="357" stroke="#2a48b4" stroke-width="1" />
<line x1="509" y1="180.5" x2="515" y2="180.5" stroke="#2a48b4" stroke-width="1" />
<line x1="509" y1="356.5" x2="515" y2="356.5" stroke="#2a48b4" stroke-width="1" />
</g>
<g shape-rendering="crispEdges">
<line x1="46" y1="473.5" x2="52" y2="473.5" stroke="#8f8f8f" stroke-width="1" />
<line x1="46" y1="422.5" x2="52" y2="422.5" stroke="#8f8f8f" stroke-width="1" />
<line x1="46" y1="370.5" x2="52" y2="370.5" stroke="#8f8f8f" stroke-width="1" />
<line x1="46" y1="319.5" x2="52" y2="319.5" stroke="#8f8f8f" stroke-width="1" />
<line x1="46" y1="268.5" x2="52" y2="268.5" stroke="#8f8f8f" stroke-width="1" />
<line x1="46" y1="217.5" x2="52" y2="217.5" stroke="#8f8f8f" stroke-width="1" />
<line x1="46" y1="165.5" x2="52" y2="165.5" stroke="#8f8f8f" stroke-width="1" />
<line x1="46" y1="114.5" x2="52" y2="114.5" stroke="#8f8f8f" stroke-width="1" />
</g>
<text x="43.5" y="477.6" font-size="12" fill="#000" text-anchor="end" font-weight="normal" >0</text>
<text x="43.5" y="426.3" font-size="12" fill="#000" text-anchor="end" font-weight="normal" >10</text>
<text x="43.5" y="375.1" font-size="12" fill="#000" text-anchor="end" font-weight="normal" >20</text>
<text x="43.5" y="323.8" font-size="12" fill="#000" text-anchor="end" font-weight="normal" >30</text>
<text x="43.5" y="272.6" font-size="12" fill="#000" text-anchor="end" font-weight="normal" >40</text>
<text x="43.5" y="221.3" font-size="12" fill="#000" text-anchor="end" font-weight="normal" >50</text>
<text x="43.5" y="170.0" font-size="12" fill="#000" text-anchor="end" font-weight="normal" >60</text>
<text x="43.5" y="118.8" font-size="12" fill="#000" text-anchor="end" font-weight="normal" >70</text>
<text transform="translate(23,282.5) rotate(-90)" font-size="12" text-anchor="middle" fill="#000">X &amp; Y</text>
<text transform="translate(77.4,483) rotate(-45)" font-size="12" text-anchor="end" fill="#000" textLength="43.5" lengthAdjust="spacingAndGlyphs">jmpman</text>
<text transform="translate(114.6,483) rotate(-45)" font-size="12" text-anchor="end" fill="#000" textLength="43.1" lengthAdjust="spacingAndGlyphs">bullseye</text>
<text transform="translate(151.9,483) rotate(-45)" font-size="12" text-anchor="end" fill="#000" textLength="27.3" lengthAdjust="spacingAndGlyphs">circle</text>
<text transform="translate(189.1,483) rotate(-45)" font-size="12" text-anchor="end" fill="#000" textLength="23.2" lengthAdjust="spacingAndGlyphs">dots</text>
<text transform="translate(226.3,483) rotate(-45)" font-size="12" text-anchor="end" fill="#000" textLength="65.0" lengthAdjust="spacingAndGlyphs">down_parab</text>
<text transform="translate(263.6,483) rotate(-45)" font-size="12" text-anchor="end" fill="#000" textLength="35.7" lengthAdjust="spacingAndGlyphs">h_lines</text>
<text transform="translate(300.8,483) rotate(-45)" font-size="12" text-anchor="end" fill="#000" textLength="52.5" lengthAdjust="spacingAndGlyphs">high_lines</text>
<text transform="translate(338.0,483) rotate(-45)" font-size="12" text-anchor="end" fill="#000" textLength="60.0" lengthAdjust="spacingAndGlyphs">slant_down</text>
<text transform="translate(375.3,483) rotate(-45)" font-size="12" text-anchor="end" fill="#000" textLength="43.8" lengthAdjust="spacingAndGlyphs">slant_up</text>
<text transform="translate(412.5,483) rotate(-45)" font-size="12" text-anchor="end" fill="#000" textLength="19.4" lengthAdjust="spacingAndGlyphs">star</text>
<text transform="translate(449.7,483) rotate(-45)" font-size="12" text-anchor="end" fill="#000" textLength="34.7" lengthAdjust="spacingAndGlyphs">v_lines</text>
<text transform="translate(486.9,483) rotate(-45)" font-size="12" text-anchor="end" fill="#000" textLength="53.9" lengthAdjust="spacingAndGlyphs">wide_lines</text>
<text transform="translate(524.2,483) rotate(-45)" font-size="12" text-anchor="end" fill="#000" textLength="5.6" lengthAdjust="spacingAndGlyphs">x</text>
<text x="292.8" y="545.8" font-size="12" fill="#000" text-anchor="middle" font-weight="normal" textLength="42" lengthAdjust="spacingAndGlyphs">Data Set</text>
<rect x="3.5" y="474.5" width="47" height="75" fill="none" stroke="#8f8f8f" stroke-width="1" shape-rendering="crispEdges"/>
<text x="26.6" y="508.7" font-size="12" fill="#8e8e8e" text-anchor="middle" font-weight="bold" textLength="24.6" lengthAdjust="spacingAndGlyphs">Map</text>
<text x="25.8" y="524.7" font-size="12" fill="#8e8e8e" text-anchor="middle" font-weight="bold" textLength="33.6" lengthAdjust="spacingAndGlyphs">Shape</text>
<text x="3.0" y="563.5" font-size="12" fill="#000" text-anchor="start" font-weight="normal" textLength="26.7" lengthAdjust="spacingAndGlyphs">Each</text>
<text x="33.6" y="563.5" font-size="12" fill="#000" text-anchor="start" font-weight="normal" textLength="22.3" lengthAdjust="spacingAndGlyphs">error</text>
<text x="60.3" y="563.5" font-size="12" fill="#000" text-anchor="start" font-weight="normal" textLength="14.0" lengthAdjust="spacingAndGlyphs">bar</text>
<text x="78.5" y="563.5" font-size="12" fill="#000" text-anchor="start" font-weight="normal" textLength="7.1" lengthAdjust="spacingAndGlyphs">is</text>
<text x="89.7" y="563.5" font-size="12" fill="#000" text-anchor="start" font-weight="normal" textLength="61.0" lengthAdjust="spacingAndGlyphs">constructed</text>
<text x="154.8" y="563.5" font-size="12" fill="#000" text-anchor="start" font-weight="normal" textLength="27.1" lengthAdjust="spacingAndGlyphs">using</text>
<text x="186.2" y="563.5" font-size="12" fill="#000" text-anchor="start" font-weight="normal" textLength="6.0" lengthAdjust="spacingAndGlyphs">1</text>
<text x="197.4" y="563.5" font-size="12" fill="#000" text-anchor="start" font-weight="normal" textLength="45.5" lengthAdjust="spacingAndGlyphs">standard</text>
<text x="247.1" y="563.5" font-size="12" fill="#000" text-anchor="start" font-weight="normal" textLength="47.5" lengthAdjust="spacingAndGlyphs">deviation</text>
<text x="298.5" y="563.5" font-size="12" fill="#000" text-anchor="start" font-weight="normal" textLength="23.7" lengthAdjust="spacingAndGlyphs">from</text>
<text x="326.1" y="563.5" font-size="12" fill="#000" text-anchor="start" font-weight="normal" textLength="14.6" lengthAdjust="spacingAndGlyphs">the</text>
<text x="345.1" y="563.5" font-size="12" fill="#000" text-anchor="start" font-weight="normal" textLength="32.7" lengthAdjust="spacingAndGlyphs">mean.</text>
<rect x="594" y="201" width="4" height="10.5" fill="#4270dd" />
<rect x="594" y="216" width="4" height="10.5" fill="#d34858" />
<text x="601.7" y="210.8" font-size="12" fill="#000" text-anchor="start" font-weight="normal" textLength="43.5" lengthAdjust="spacingAndGlyphs">Mean(X)</text>
<text x="601.7" y="225.8" font-size="12" fill="#000" text-anchor="start" font-weight="normal" textLength="43.5" lengthAdjust="spacingAndGlyphs">Mean(Y)</text>
<g filter="url(#sh)"><rect x="104.5" y="151.5" width="219" height="303.5" rx="3" ry="3" fill="#fff" stroke="#b2b2b2"/></g>
<rect x="105" y="152" width="218" height="53" rx="3" fill="url(#tg)"/>
<text x="113.7" y="165.3" font-size="12" fill="#000" text-anchor="start" font-weight="normal" textLength="52.2" lengthAdjust="spacingAndGlyphs">100 Rows:</text>
<text x="171.7" y="165.3" font-size="12" fill="#000" text-anchor="start" font-weight="normal" textLength="133.3" lengthAdjust="spacingAndGlyphs">201, 202, 203, 204, 205, ...</text>
<text x="119.4" y="181.3" font-size="12" fill="#000" text-anchor="start" font-weight="normal" textLength="46.9" lengthAdjust="spacingAndGlyphs">Data Set:</text>
<text x="168.6" y="181.3" font-size="12" fill="#000" text-anchor="start" font-weight="normal" textLength="22.3" lengthAdjust="spacingAndGlyphs">dots</text>
<text x="119.4" y="197.3" font-size="12" fill="#000" text-anchor="start" font-weight="normal" textLength="46.9" lengthAdjust="spacingAndGlyphs">Mean(Y):</text>
<text x="168.6" y="197.3" font-size="12" fill="#000" text-anchor="start" font-weight="normal" textLength="34.3" lengthAdjust="spacingAndGlyphs">53.860</text>
<rect x="108.5" y="205" width="208.5" height="248.0" fill="#f7f7f7" />
<rect x="318" y="211" width="3.5" height="242.0" fill="url(#ts)"/>
<rect x="150.5" y="205.5" width="153.0" height="205.0" fill="#fff" stroke="#a9a9a9" stroke-width="1" shape-rendering="crispEdges"/>
<g shape-rendering="crispEdges">
<path d="M150.5 210.5 H243.5 V242.5 H150.5" fill="#b9c9b9" stroke="#5f6e5f"/>
<path d="M150.5 275.5 H183.5 V307.5 H150.5" fill="#b9c9b9" stroke="#5f6e5f"/>
<path d="M150.5 307.5 H276.5 V340.5 H150.5" fill="#b9c9b9" stroke="#5f6e5f"/>
<path d="M150.5 372.5 H198.5 V405.5 H150.5" fill="#b9c9b9" stroke="#5f6e5f"/>
<line x1="144.0" y1="210.5" x2="150.5" y2="210.5" stroke="#939393" stroke-width="1" />
<line x1="144.0" y1="242.5" x2="150.5" y2="242.5" stroke="#939393" stroke-width="1" />
<line x1="144.0" y1="275.5" x2="150.5" y2="275.5" stroke="#939393" stroke-width="1" />
<line x1="144.0" y1="307.5" x2="150.5" y2="307.5" stroke="#939393" stroke-width="1" />
<line x1="144.0" y1="340.5" x2="150.5" y2="340.5" stroke="#939393" stroke-width="1" />
<line x1="144.0" y1="372.5" x2="150.5" y2="372.5" stroke="#939393" stroke-width="1" />
<line x1="144.0" y1="405.5" x2="150.5" y2="405.5" stroke="#939393" stroke-width="1" />
<line x1="150.0" y1="410.5" x2="304.0" y2="410.5" stroke="#939393" stroke-width="1" />
<line x1="150.5" y1="410.5" x2="150.5" y2="416.5" stroke="#939393" stroke-width="1" />
<line x1="180.5" y1="410.5" x2="180.5" y2="416.5" stroke="#939393" stroke-width="1" />
<line x1="210.5" y1="410.5" x2="210.5" y2="416.5" stroke="#939393" stroke-width="1" />
<line x1="240.5" y1="410.5" x2="240.5" y2="416.5" stroke="#939393" stroke-width="1" />
<line x1="270.5" y1="410.5" x2="270.5" y2="416.5" stroke="#939393" stroke-width="1" />
<line x1="299.5" y1="410.5" x2="299.5" y2="416.5" stroke="#939393" stroke-width="1" />
</g>
<text x="142.3" y="215.0" font-size="12" fill="#000" text-anchor="end" font-weight="normal" >80</text>
<text x="142.3" y="247.0" font-size="12" fill="#000" text-anchor="end" font-weight="normal" >70</text>
<text x="142.3" y="280.0" font-size="12" fill="#000" text-anchor="end" font-weight="normal" >60</text>
<text x="142.3" y="312.0" font-size="12" fill="#000" text-anchor="end" font-weight="normal" >50</text>
<text x="142.3" y="345.0" font-size="12" fill="#000" text-anchor="end" font-weight="normal" >40</text>
<text x="142.3" y="377.0" font-size="12" fill="#000" text-anchor="end" font-weight="normal" >30</text>
<text x="142.3" y="410.0" font-size="12" fill="#000" text-anchor="end" font-weight="normal" >20</text>
<text x="150.0" y="429.4" font-size="12" fill="#000" text-anchor="middle" font-weight="normal" >0</text>
<text x="179.8" y="429.4" font-size="12" fill="#000" text-anchor="middle" font-weight="normal" >10</text>
<text x="209.7" y="429.4" font-size="12" fill="#000" text-anchor="middle" font-weight="normal" >20</text>
<text x="239.5" y="429.4" font-size="12" fill="#000" text-anchor="middle" font-weight="normal" >30</text>
<text x="269.4" y="429.4" font-size="12" fill="#000" text-anchor="middle" font-weight="normal" >40</text>
<text x="299.2" y="429.4" font-size="12" fill="#000" text-anchor="middle" font-weight="normal" >50</text>
<text x="120.5" y="312.3" font-size="12" fill="#000" text-anchor="middle" font-weight="normal" >Y</text>
<g filter="url(#sh)"><rect x="374.5" y="140.5" width="219" height="303.5" rx="3" ry="3" fill="#fff" stroke="#b2b2b2"/></g>
<rect x="375" y="141" width="218" height="53" rx="3" fill="url(#tg)"/>
<text x="383.7" y="154.3" font-size="12" fill="#000" text-anchor="start" font-weight="normal" textLength="52.2" lengthAdjust="spacingAndGlyphs">100 Rows:</text>
<text x="441.7" y="154.3" font-size="12" fill="#000" text-anchor="start" font-weight="normal" textLength="133.3" lengthAdjust="spacingAndGlyphs">901, 902, 903, 904, 905, ...</text>
<text x="389.4" y="170.3" font-size="12" fill="#000" text-anchor="start" font-weight="normal" textLength="46.9" lengthAdjust="spacingAndGlyphs">Data Set:</text>
<text x="438.6" y="170.3" font-size="12" fill="#000" text-anchor="start" font-weight="normal" textLength="18.6" lengthAdjust="spacingAndGlyphs">star</text>
<text x="389.4" y="186.3" font-size="12" fill="#000" text-anchor="start" font-weight="normal" textLength="46.9" lengthAdjust="spacingAndGlyphs">Mean(Y):</text>
<text x="438.6" y="186.3" font-size="12" fill="#000" text-anchor="start" font-weight="normal" textLength="34.3" lengthAdjust="spacingAndGlyphs">53.852</text>
<rect x="378.5" y="194" width="208.5" height="248.0" fill="#f7f7f7" />
<rect x="588" y="200" width="3.5" height="242.0" fill="url(#ts)"/>
<rect x="420.5" y="194.5" width="153.0" height="205.0" fill="#fff" stroke="#a9a9a9" stroke-width="1" shape-rendering="crispEdges"/>
<g shape-rendering="crispEdges">
<path d="M420.5 199.5 H438.5 V220.5 H420.5" fill="#b9c9b9" stroke="#5f6e5f"/>
<path d="M420.5 220.5 H435.5 V243.5 H420.5" fill="#b9c9b9" stroke="#5f6e5f"/>
<path d="M420.5 243.5 H543.5 V265.5 H420.5" fill="#b9c9b9" stroke="#5f6e5f"/>
<path d="M420.5 265.5 H492.5 V286.5 H420.5" fill="#b9c9b9" stroke="#5f6e5f"/>
<path d="M420.5 286.5 H435.5 V308.5 H420.5" fill="#b9c9b9" stroke="#5f6e5f"/>
<path d="M420.5 308.5 H429.5 V331.5 H420.5" fill="#b9c9b9" stroke="#5f6e5f"/>
<path d="M420.5 331.5 H438.5 V352.5 H420.5" fill="#b9c9b9" stroke="#5f6e5f"/>
<path d="M420.5 352.5 H441.5 V374.5 H420.5" fill="#b9c9b9" stroke="#5f6e5f"/>
<path d="M420.5 374.5 H429.5 V396.5 H420.5" fill="#b9c9b9" stroke="#5f6e5f"/>
<line x1="414.0" y1="199.5" x2="420.5" y2="199.5" stroke="#939393" stroke-width="1" />
<line x1="414.0" y1="220.5" x2="420.5" y2="220.5" stroke="#939393" stroke-width="1" />
<line x1="414.0" y1="243.5" x2="420.5" y2="243.5" stroke="#939393" stroke-width="1" />
<line x1="414.0" y1="265.5" x2="420.5" y2="265.5" stroke="#939393" stroke-width="1" />
<line x1="414.0" y1="286.5" x2="420.5" y2="286.5" stroke="#939393" stroke-width="1" />
<line x1="414.0" y1="308.5" x2="420.5" y2="308.5" stroke="#939393" stroke-width="1" />
<line x1="414.0" y1="331.5" x2="420.5" y2="331.5" stroke="#939393" stroke-width="1" />
<line x1="414.0" y1="352.5" x2="420.5" y2="352.5" stroke="#939393" stroke-width="1" />
<line x1="414.0" y1="374.5" x2="420.5" y2="374.5" stroke="#939393" stroke-width="1" />
<line x1="414.0" y1="396.5" x2="420.5" y2="396.5" stroke="#939393" stroke-width="1" />
<line x1="420.0" y1="399.5" x2="574.0" y2="399.5" stroke="#939393" stroke-width="1" />
<line x1="420.5" y1="399.5" x2="420.5" y2="405.5" stroke="#939393" stroke-width="1" />
<line x1="450.5" y1="399.5" x2="450.5" y2="405.5" stroke="#939393" stroke-width="1" />
<line x1="480.5" y1="399.5" x2="480.5" y2="405.5" stroke="#939393" stroke-width="1" />
<line x1="510.5" y1="399.5" x2="510.5" y2="405.5" stroke="#939393" stroke-width="1" />
<line x1="540.5" y1="399.5" x2="540.5" y2="405.5" stroke="#939393" stroke-width="1" />
<line x1="569.5" y1="399.5" x2="569.5" y2="405.5" stroke="#939393" stroke-width="1" />
</g>
<text x="412.3" y="204.0" font-size="12" fill="#000" text-anchor="end" font-weight="normal" >90</text>
<text x="412.3" y="225.0" font-size="12" fill="#000" text-anchor="end" font-weight="normal" >80</text>
<text x="412.3" y="248.0" font-size="12" fill="#000" text-anchor="end" font-weight="normal" >70</text>
<text x="412.3" y="270.0" font-size="12" fill="#000" text-anchor="end" font-weight="normal" >60</text>
<text x="412.3" y="291.0" font-size="12" fill="#000" text-anchor="end" font-weight="normal" >50</text>
<text x="412.3" y="313.0" font-size="12" fill="#000" text-anchor="end" font-weight="normal" >40</text>
<text x="412.3" y="336.0" font-size="12" fill="#000" text-anchor="end" font-weight="normal" >30</text>
<text x="412.3" y="357.0" font-size="12" fill="#000" text-anchor="end" font-weight="normal" >20</text>
<text x="412.3" y="379.0" font-size="12" fill="#000" text-anchor="end" font-weight="normal" >10</text>
<text x="412.3" y="401.0" font-size="12" fill="#000" text-anchor="end" font-weight="normal" >0</text>
<text x="420.0" y="418.4" font-size="12" fill="#000" text-anchor="middle" font-weight="normal" >0</text>
<text x="449.8" y="418.4" font-size="12" fill="#000" text-anchor="middle" font-weight="normal" >10</text>
<text x="479.7" y="418.4" font-size="12" fill="#000" text-anchor="middle" font-weight="normal" >20</text>
<text x="509.5" y="418.4" font-size="12" fill="#000" text-anchor="middle" font-weight="normal" >30</text>
<text x="539.4" y="418.4" font-size="12" fill="#000" text-anchor="middle" font-weight="normal" >40</text>
<text x="569.2" y="418.4" font-size="12" fill="#000" text-anchor="middle" font-weight="normal" >50</text>
<text x="390.5" y="301.3" font-size="12" fill="#000" text-anchor="middle" font-weight="normal" >Y</text>
</svg>
</body></html>
